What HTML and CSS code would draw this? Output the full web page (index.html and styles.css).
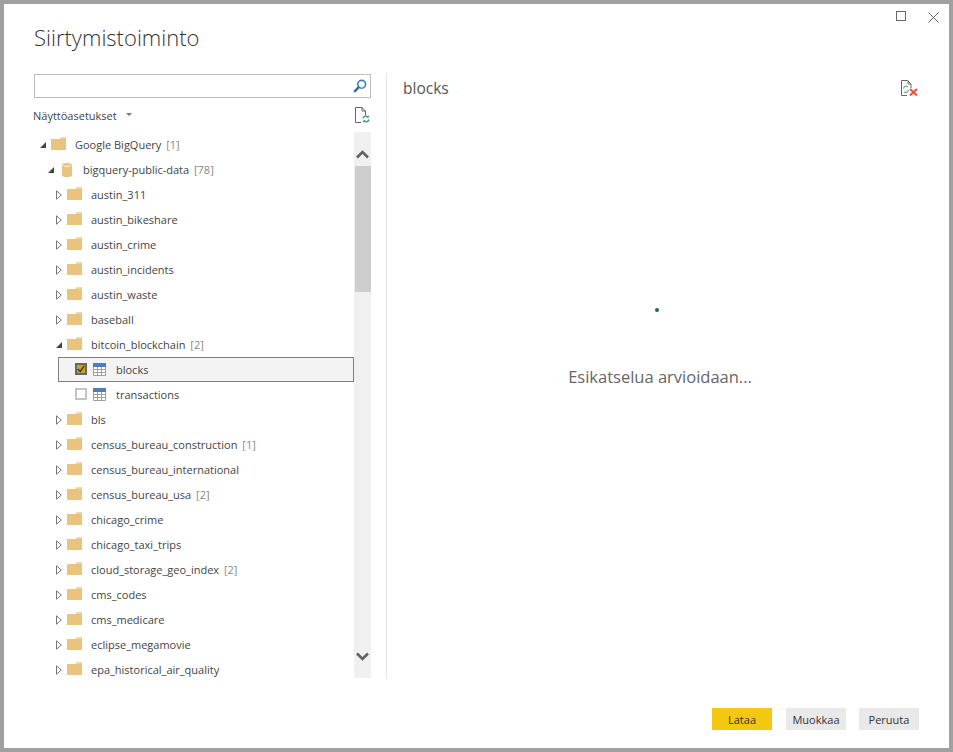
FILE: index.html
```html
<!DOCTYPE html>
<html lang="en">
<head>
  <link rel="stylesheet" href="styles.css">
</head>
<body>
  <svg class="defs" width="0" height="0">
    <symbol id="folder" viewBox="0 0 15 13">
      <path d="M0 2h9V1.2L10 0h4l1 .6V13H0z" fill="#eac37f"/>
      <path d="M10 1h4" stroke="#fff" stroke-width=".7"/>
    </symbol>
    <symbol id="open" viewBox="0 0 6 6">
      <path d="M6 0v6H0z" fill="#444"/>
    </symbol>
    <symbol id="closed" viewBox="0 0 6 10">
      <path d="M.5.8 5.3 5 .5 9.2z" fill="#fff" stroke="#777"/>
    </symbol>
    <symbol id="table" viewBox="0 0 13 13">
      <rect width="13" height="13" fill="#fff"/>
      <rect width="13" height="4" fill="#4a7fb8"/>
      <path d="M.5 4v8.5h12V4M.5 6.5h12M.5 9.5h12M4.5 4v8.5M8.5 4v8.5" fill="none" stroke="#a0a0a0"/>
    </symbol>
  </svg>

  <div class="window">
    <div class="controls">
      <svg class="ctl-max" width="10" height="10"><rect x=".5" y=".5" width="9" height="9" fill="none" stroke="#666"/></svg>
      <svg class="ctl-close" width="11" height="11"><path d="M.5.5l10 10M10.5.5l-10 10" stroke="#666"/></svg>
    </div>
    <h1 class="title">Siirtymistoiminto</h1>

    <div class="content">
      <div class="left">
        <div class="search">
          <svg width="14" height="14" viewBox="0 0 14 14"><circle cx="8.7" cy="5.3" r="3.9" fill="none" stroke="#3f7ab6" stroke-width="1.6"/><path d="M5.8 8.2 1.2 12.8" stroke="#2f6aa6" stroke-width="2.4"/></svg>
        </div>
        <div class="options">
          <span class="options-label">Näyttöasetukset</span>
          <span class="caret"></span>
          <svg class="refresh" width="15" height="16" viewBox="0 0 15 16">
            <path d="M6 15.500H.5V.5h6.500L10.500 4v4M7 .5v3.500h3.500" fill="none" stroke="#666"/>
            <path d="M8 11.500a3 3 0 0 1 5-1.500M14 12.500a3 3 0 0 1-5 1.500" fill="none" stroke="#3f9a74" stroke-width="1.400"/>
            <path d="M13.800 8.300v2.500h-2.500zM8.200 15.700v-2.500h2.500z" fill="#3f9a74"/>
          </svg>
        </div>

        <div class="navigator">
          <div class="tree">
            <div class="row lv0"><svg class="arrow-open"><use href="#open"/></svg><svg class="folder"><use href="#folder"/></svg><span class="name">Google BigQuery <i>[1]</i></span></div>
            <div class="row lv1"><svg class="arrow-open"><use href="#open"/></svg><svg class="db" viewBox="0 0 10 14"><path d="M0 2a5 2 0 0 1 10 0v10a5 2 0 0 1-10 0z" fill="#eac37f"/><path d="M1 2.500a4.500 1.500 0 0 0 8 0" fill="none" stroke="#fff" stroke-width=".8"/></svg><span class="name">bigquery-public-data <i>[78]</i></span></div>
            <div class="row lv2"><svg class="arrow-closed"><use href="#closed"/></svg><svg class="folder"><use href="#folder"/></svg><span class="name">austin_311</span></div>
            <div class="row lv2"><svg class="arrow-closed"><use href="#closed"/></svg><svg class="folder"><use href="#folder"/></svg><span class="name">austin_bikeshare</span></div>
            <div class="row lv2"><svg class="arrow-closed"><use href="#closed"/></svg><svg class="folder"><use href="#folder"/></svg><span class="name">austin_crime</span></div>
            <div class="row lv2"><svg class="arrow-closed"><use href="#closed"/></svg><svg class="folder"><use href="#folder"/></svg><span class="name">austin_incidents</span></div>
            <div class="row lv2"><svg class="arrow-closed"><use href="#closed"/></svg><svg class="folder"><use href="#folder"/></svg><span class="name">austin_waste</span></div>
            <div class="row lv2"><svg class="arrow-closed"><use href="#closed"/></svg><svg class="folder"><use href="#folder"/></svg><span class="name">baseball</span></div>
            <div class="row lv2"><svg class="arrow-open"><use href="#open"/></svg><svg class="folder"><use href="#folder"/></svg><span class="name">bitcoin_blockchain <i>[2]</i></span></div>
            <div class="row lv3 selected"><span class="check checked"><svg width="10" height="10" viewBox="0 0 10 10"><path d="M1 5l3 3 5-7" fill="none" stroke="#333" stroke-width="1.800"/></svg></span><svg class="table"><use href="#table"/></svg><span class="name">blocks</span></div>
            <div class="row lv3"><span class="check"></span><svg class="table"><use href="#table"/></svg><span class="name">transactions</span></div>
            <div class="row lv2"><svg class="arrow-closed"><use href="#closed"/></svg><svg class="folder"><use href="#folder"/></svg><span class="name">bls</span></div>
            <div class="row lv2"><svg class="arrow-closed"><use href="#closed"/></svg><svg class="folder"><use href="#folder"/></svg><span class="name">census_bureau_construction <i>[1]</i></span></div>
            <div class="row lv2"><svg class="arrow-closed"><use href="#closed"/></svg><svg class="folder"><use href="#folder"/></svg><span class="name">census_bureau_international</span></div>
            <div class="row lv2"><svg class="arrow-closed"><use href="#closed"/></svg><svg class="folder"><use href="#folder"/></svg><span class="name">census_bureau_usa <i>[2]</i></span></div>
            <div class="row lv2"><svg class="arrow-closed"><use href="#closed"/></svg><svg class="folder"><use href="#folder"/></svg><span class="name">chicago_crime</span></div>
            <div class="row lv2"><svg class="arrow-closed"><use href="#closed"/></svg><svg class="folder"><use href="#folder"/></svg><span class="name">chicago_taxi_trips</span></div>
            <div class="row lv2"><svg class="arrow-closed"><use href="#closed"/></svg><svg class="folder"><use href="#folder"/></svg><span class="name">cloud_storage_geo_index <i>[2]</i></span></div>
            <div class="row lv2"><svg class="arrow-closed"><use href="#closed"/></svg><svg class="folder"><use href="#folder"/></svg><span class="name">cms_codes</span></div>
            <div class="row lv2"><svg class="arrow-closed"><use href="#closed"/></svg><svg class="folder"><use href="#folder"/></svg><span class="name">cms_medicare</span></div>
            <div class="row lv2"><svg class="arrow-closed"><use href="#closed"/></svg><svg class="folder"><use href="#folder"/></svg><span class="name">eclipse_megamovie</span></div>
            <div class="row lv2"><svg class="arrow-closed"><use href="#closed"/></svg><svg class="folder"><use href="#folder"/></svg><span class="name">epa_historical_air_quality</span></div>
          </div>
          <div class="scrollbar">
            <div class="scroll-btn"><svg width="13" height="9" viewBox="0 0 13 9"><path d="M1 7.500l5.500-5.500 5.500 5.500" fill="none" stroke="#606060" stroke-width="2.600"/></svg></div>
            <div class="thumb"></div>
            <div class="scroll-btn scroll-down"><svg width="13" height="9" viewBox="0 0 13 9"><path d="M1 1.500l5.500 5.500 5.500-5.500" fill="none" stroke="#606060" stroke-width="2.600"/></svg></div>
          </div>
        </div>
      </div>

      <div class="preview">
        <div class="preview-head">
          <span class="preview-name">blocks</span>
          <svg width="18" height="16" viewBox="0 0 18 16">
            <path d="M7 15.500H1.500V.5h6l3.500 3.500v4M8 .5v3.500h3" fill="none" stroke="#666"/>
            <path d="M3.500 8.500a3 3 0 0 1 4.500-2M8.500 10a3 3 0 0 1-4.500 2" fill="none" stroke="#5fa88c" stroke-width="1.200"/>
            <path d="M10 9l7 6.500M17 9l-7 6.500" stroke="#e2573a" stroke-width="2"/>
          </svg>
        </div>
        <div class="loading">
          <span class="spinner"></span>
          <span class="loading-text">Esikatselua arvioidaan...</span>
        </div>
      </div>
    </div>

    <div class="footer">
      <button class="btn primary">Lataa</button>
      <button class="btn">Muokkaa</button>
      <button class="btn last">Peruuta</button>
    </div>
  </div>
</body>
</html>
```

FILE: styles.css
```css
* {
  box-sizing: border-box;
}

body {
  margin: 0;
  font-family: "Open Sans", "Liberation Sans", sans-serif;
  color: #444;
}

.defs {
  display: block;
  height: 0;
}

.window {
  width: 953px;
  height: 752px;
  border: 4px solid #a0a0a0;
  background: #fff;
  display: flex;
  flex-direction: column;
  overflow: hidden;
}

.controls {
  height: 17px;
  display: flex;
  align-items: flex-end;
  padding-right: 10px;
  justify-content: flex-end;
}

.controls svg {
  display: block;
}

.ctl-max {
  margin-right: 22px;
}

.ctl-close {
  margin-bottom: -2px;
}

.title {
  margin: 0 0 0 30px;
  height: 53px;
  font-size: 22px;
  font-weight: 300;
  line-height: 32px;
  color: #333;
}

.content {
  flex: 1;
  display: flex;
  min-height: 0;
}

.left {
  width: 337px;
  margin-left: 30px;
  display: flex;
  flex-direction: column;
}

.search {
  height: 24px;
  border: 1px solid #bdbdbd;
  display: flex;
  align-items: center;
  justify-content: flex-end;
  padding-right: 3px;
  flex-shrink: 0;
}

.options {
  height: 34px;
  display: flex;
  align-items: center;
  flex-shrink: 0;
  font-size: 11px;
  margin-left: -1px;
}

.options-label {
  color: #444;
}

.caret {
  width: 0;
  height: 0;
  margin-left: 9px;
  margin-bottom: 2px;
  border-left: 3px solid transparent;
  border-right: 3px solid transparent;
  border-top: 3px solid #777;
}

.refresh {
  margin-left: auto;
  margin-right: 1px;
}

.navigator {
  height: 546px;
  display: flex;
  flex-shrink: 0;
}

.tree {
  width: 320px;
  overflow: hidden;
}

.row {
  height: 25px;
  display: flex;
  align-items: center;
  font-size: 11px;
  white-space: nowrap;
}

.row i {
  font-style: normal;
  margin-left: 2px;
  color: #888;
}

.lv0 { padding-left: 6px; }
.lv1 { padding-left: 14px; }
.lv2 { padding-left: 22px; }
.lv3 { padding-left: 41px; }

.selected {
  margin-left: 24px;
  padding-left: 16px;
  height: 25px;
  border: 1px solid #808080;
  background: #f3f3f3;
}

.arrow-open {
  width: 6px;
  height: 6px;
}

.arrow-closed {
  width: 6px;
  height: 10px;
}

.folder {
  width: 15px;
  height: 13px;
  margin-left: 5px;
  margin-top: -2px;
}

.db {
  width: 10px;
  height: 14px;
  margin-left: 8px;
  margin-right: 2px;
}

.name {
  margin-left: 9px;
}

.check {
  width: 12px;
  height: 12px;
  margin-top: -1px;
  border: 2px solid #c4c4c4;
  background: #fff;
  display: flex;
  align-items: center;
  justify-content: center;
}

.checked {
  border-color: #666;
  background: #c9a227;
}

.table {
  width: 13px;
  height: 13px;
  margin-left: 6px;
  margin-top: -1px;
}

.lv3 .name {
  margin-left: 10px;
}

.scrollbar {
  width: 17px;
  background: #f0f0f0;
  display: flex;
  flex-direction: column;
}

.scroll-btn {
  height: 34px;
  display: flex;
  align-items: center;
  justify-content: center;
  padding-top: 10px;
}

.scroll-down {
  margin-top: auto;
  padding-top: 0;
  padding-bottom: 10px;
}

.thumb {
  height: 126px;
  margin-left: 1px;
  background: #cdcdcd;
}

.preview {
  flex: 1;
  margin-left: 15px;
  height: 604px;
  border-left: 1px solid #e4e4e4;
  padding-left: 16px;
  padding-right: 31px;
  display: flex;
  flex-direction: column;
}

.preview-head {
  height: 28px;
  display: flex;
  align-items: center;
  justify-content: space-between;
}

.preview-name {
  font-size: 15.500px;
  color: #555;
}

.loading {
  display: flex;
  flex-direction: column;
  align-items: center;
  padding-top: 206px;
  padding-right: 1px;
}

.spinner {
  width: 4px;
  height: 4px;
  border-radius: 50%;
  margin-right: 6px;
  background: #1f6b4a;
}

.loading-text {
  margin-top: 53px;
  font-size: 16.500px;
  color: #666;
}

.footer {
  height: 70px;
  padding-top: 30px;
  padding-right: 30px;
  display: flex;
  justify-content: flex-end;
  align-items: flex-start;
}

.btn {
  width: 60px;
  height: 22px;
  margin-left: 14px;
  padding: 0;
  border: 0;
  background: #e9e9e9;
  font-family: inherit;
  font-size: 11px;
  color: #333;
}

.primary {
  background: #f2c811;
}

.last {
  margin-left: 13px;
}
```
